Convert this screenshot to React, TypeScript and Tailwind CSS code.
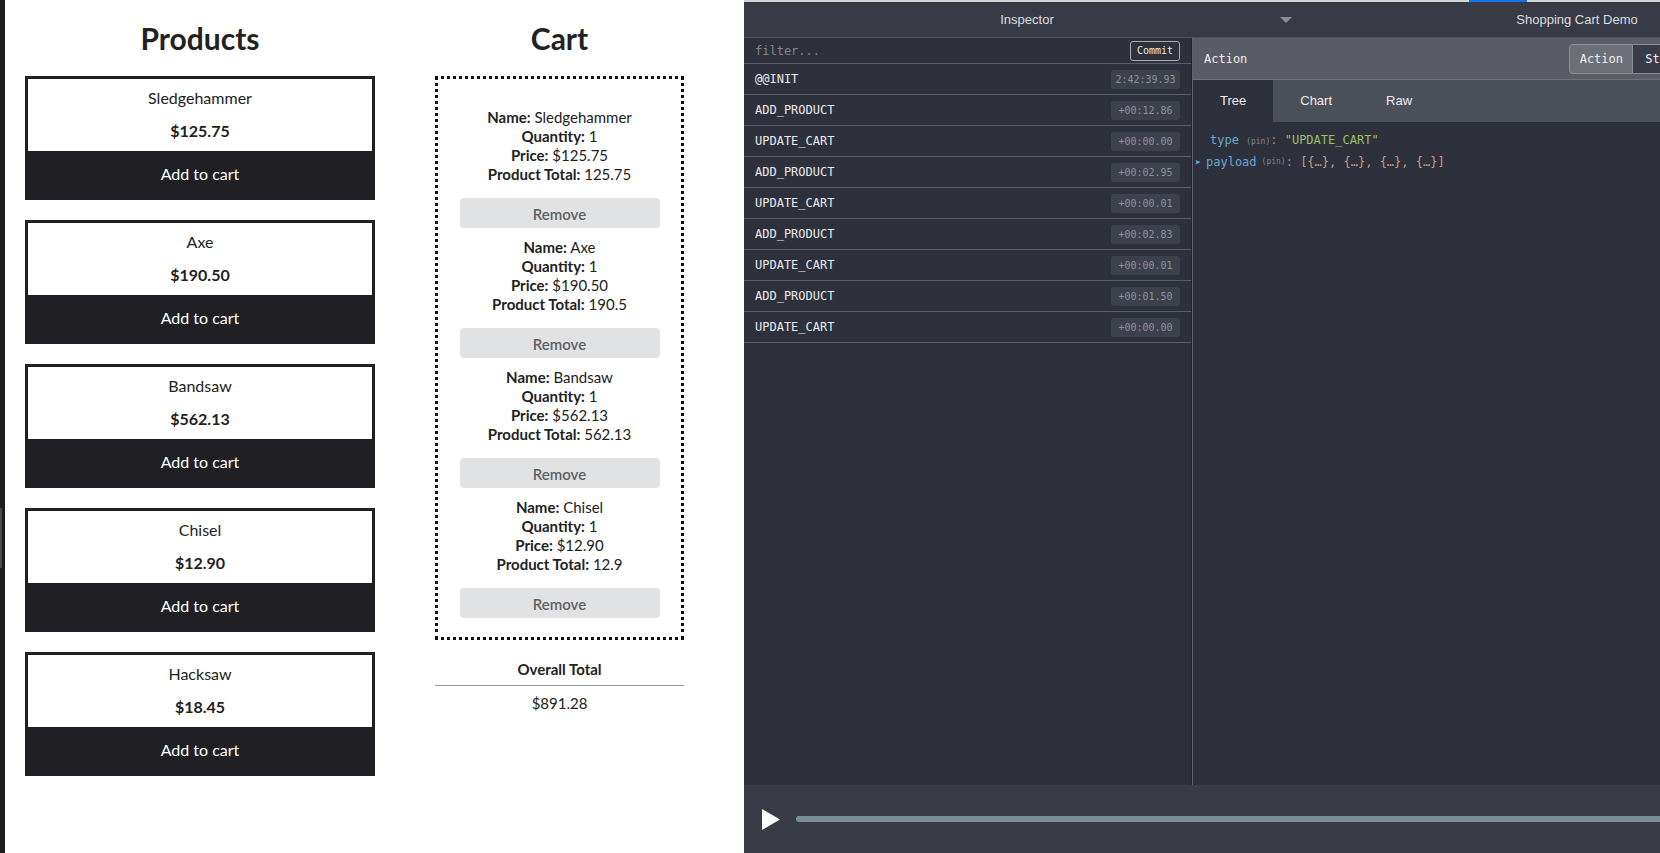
import React from "react";

const products = [
  { name: "Sledgehammer", price: "$125.75" },
  { name: "Axe", price: "$190.50" },
  { name: "Bandsaw", price: "$562.13" },
  { name: "Chisel", price: "$12.90" },
  { name: "Hacksaw", price: "$18.45" },
];

const cart = [
  { name: "Sledgehammer", price: "$125.75", total: "125.75" },
  { name: "Axe", price: "$190.50", total: "190.5" },
  { name: "Bandsaw", price: "$562.13", total: "562.13" },
  { name: "Chisel", price: "$12.90", total: "12.9" },
];

const actions: [string, string][] = [
  ["@@INIT", "2:42:39.93"],
  ["ADD_PRODUCT", "+00:12.86"],
  ["UPDATE_CART", "+00:00.00"],
  ["ADD_PRODUCT", "+00:02.95"],
  ["UPDATE_CART", "+00:00.01"],
  ["ADD_PRODUCT", "+00:02.83"],
  ["UPDATE_CART", "+00:00.01"],
  ["ADD_PRODUCT", "+00:01.50"],
  ["UPDATE_CART", "+00:00.00"],
];

function ProductCard({ name, price }: { name: string; price: string }) {
  return (
    <div className="border-[3px] border-[#202024] flex flex-col">
      <div className="bg-white flex flex-col items-center pt-[7px] pb-[8px]">
        <div className="text-[16px] leading-[24px] text-[#222]">{name}</div>
        <div className="mt-[9px] text-[16px] leading-[24px] font-bold text-[#222]">{price}</div>
      </div>
      <div className="h-[46px] bg-[#202024] flex items-center justify-center text-white text-[16px]">
        Add to cart
      </div>
    </div>
  );
}

function CartItem({ name, price, total }: { name: string; price: string; total: string }) {
  return (
    <div className="pt-[10px] flex flex-col items-center">
      <div className="text-[15px] leading-[19px] text-[#222] text-center">
        <div><b>Name:</b> {name}</div>
        <div><b>Quantity:</b> 1</div>
        <div><b>Price:</b> {price}</div>
        <div><b>Product Total:</b> {total}</div>
      </div>
      <div className="mt-[14px] w-[200px] h-[30px] rounded-[4px] bg-[#e1e2e4] flex items-center justify-center pt-[3px] text-[15px] font-semibold text-[#5f6062]">
        Remove
      </div>
    </div>
  );
}

export default function App() {
  const mono = "font-['DejaVu_Sans_Mono',monospace]";
  return (
    <div className="flex w-[1660px] h-[853px] overflow-hidden bg-white">
      <div className="w-[5px] shrink-0 bg-[#1c1c1c] flex flex-col">
        <div className="mt-[508px] h-[60px] w-[2px] bg-[#4a4a4a]" />
      </div>

      <div className="w-[739px] shrink-0 flex pl-[20px] font-['Lato',sans-serif] text-[#222]">
        <div className="w-[350px] flex flex-col">
          <h1 className="pt-[20px] h-[56px] text-[30px] leading-[36px] font-bold text-center">Products</h1>
          <div className="mt-[20px] flex flex-col gap-[20px]">
            {products.map((p) => (
              <ProductCard key={p.name} {...p} />
            ))}
          </div>
        </div>

        <div className="ml-[60px] w-[249px] flex flex-col">
          <h1 className="pt-[20px] h-[56px] text-[30px] leading-[36px] font-bold text-center">Cart</h1>
          <div className="mt-[20px] border-[3px] border-dotted border-[#111] pt-[19px] pb-[19px] flex flex-col">
            {cart.map((c) => (
              <CartItem key={c.name} {...c} />
            ))}
          </div>
          <div className="mt-[20px] text-[15px] leading-[19px] font-bold text-center">Overall Total</div>
          <div className="mt-[6px] h-px bg-[#9a9a9a]" />
          <div className="mt-[8px] text-[15px] leading-[19px] text-center">$891.28</div>
        </div>
      </div>

      <div className="w-[1100px] shrink-0 flex flex-col bg-[#2e313b] font-['Liberation_Sans',Arial,sans-serif]">
        <div className="h-[2px] flex bg-[#d3d4d6]">
          <div className="w-[725px]" />
          <div className="w-[58px] bg-[#1a73e8]" />
        </div>
        <div className="h-[36px] flex bg-[#383b46] border-b border-[#4f535c] text-[13px] text-[#dcdde0]">
          <div className="w-[566px] relative flex items-center justify-center">
            Inspector
            <svg className="absolute right-[18px] top-[15px]" width="12" height="7" viewBox="0 0 12 7">
              <path d="M0 0 L12 0 L6 6 Z" fill="#8a8d94" />
            </svg>
          </div>
          <div className="flex-1 relative flex items-center justify-center">
            Shopping Cart Demo
            <svg className="absolute right-[18px] top-[15px]" width="12" height="7" viewBox="0 0 12 7">
              <path d="M0 0 L12 0 L6 6 Z" fill="#8a8d94" />
            </svg>
          </div>
        </div>

        <div className="flex-1 flex min-h-0">
          <div className={`w-[447px] shrink-0 flex flex-col ${mono}`}>
            <div className="h-[26px] border-b border-[#5a5e67] flex items-center pl-[11px] pr-[11px]">
              <span className="text-[12px] text-[#80848c]">filter...</span>
              <span className="ml-auto h-[20px] px-[6px] border border-[#a9abb0] rounded-[3px] text-[10px] leading-[18px] text-[#e8e8e8]">
                Commit
              </span>
            </div>
            {actions.map(([a, t], i) => (
              <div key={i} className="h-[31px] border-b border-[#5a5e67] flex items-center pl-[11px] pr-[11px]">
                <span className="text-[12px] text-[#e9eaec]">{a}</span>
                <span className="ml-auto h-[19px] w-[69px] rounded-[3px] bg-[#3d414c] flex items-center justify-center text-[10px] text-[#8d9199]">
                  {t}
                </span>
              </div>
            ))}
          </div>
          <div className="w-px bg-[#23262d]" />
          <div className="w-px bg-[#60646d]" />

          <div className="flex-1 flex flex-col">
            <div className={`h-[42px] bg-[#5a5d65] border-b border-[#707379] flex items-center pl-[11px] ${mono}`}>
              <span className="text-[12px] text-[#eeeeee]">Action</span>
              <div className="ml-[322px] flex h-[30px]">
                <div className="w-[64px] rounded-l-[4px] border border-[#8b8e94] bg-[#6c6f76] flex items-center justify-center text-[12px] text-[#f0f0f0]">
                  Action
                </div>
                <div className="w-[60px] border-y border-[#8b8e94] bg-[#393c46] flex items-center justify-center text-[12px] text-[#f0f0f0]">
                  State
                </div>
                <div className="w-[50px] rounded-r-[4px] border border-[#8b8e94] bg-[#393c46] flex items-center justify-center text-[12px] text-[#f0f0f0]">
                  Diff
                </div>
              </div>
            </div>
            <div className="h-[42px] bg-[#4b4f58] flex text-[13px] text-[#ececec]">
              <div className="px-[27px] bg-[#2e313b] flex items-center">Tree</div>
              <div className="px-[27px] flex items-center">Chart</div>
              <div className="px-[27px] flex items-center">Raw</div>
            </div>
            <div className={`pt-[7px] text-[12px] leading-[22px] ${mono}`}>
              <div className="pl-[17px] h-[22px]">
                <span className="text-[#67a8d3]">type</span>{" "}
                <span className="text-[8px] text-[#80848c]">(pin)</span>
                <span className="text-[#8d9199]">: </span>
                <span className="text-[#9cbf6a]">"UPDATE_CART"</span>
              </div>
              <div className="pl-[3px] h-[21px] flex items-center">
                <span className="w-[10px] text-[7px] leading-[10px] text-[#67a8d3]">▶</span>
                <span className="text-[#67a8d3]">payload</span>
                <span className="ml-[5px] text-[8px] text-[#80848c]">(pin)</span>
                <span className="text-[#8d9199] whitespace-pre">: </span>
                <span className="text-[#c79e7e]">[{"{…}"}, {"{…}"}, {"{…}"}, {"{…}"}]</span>
              </div>
            </div>
          </div>
        </div>

        <div className="h-[68px] shrink-0 bg-[#393c47] flex items-center">
          <svg className="ml-[18px]" width="18" height="21" viewBox="0 0 18 21">
            <path d="M0 0 L18 10.5 L0 21 Z" fill="#ffffff" />
          </svg>
          <div className="ml-[16px] flex-1 h-[6px] rounded-[3px] bg-[#7a8e9a]" />
        </div>
      </div>
    </div>
  );
}
